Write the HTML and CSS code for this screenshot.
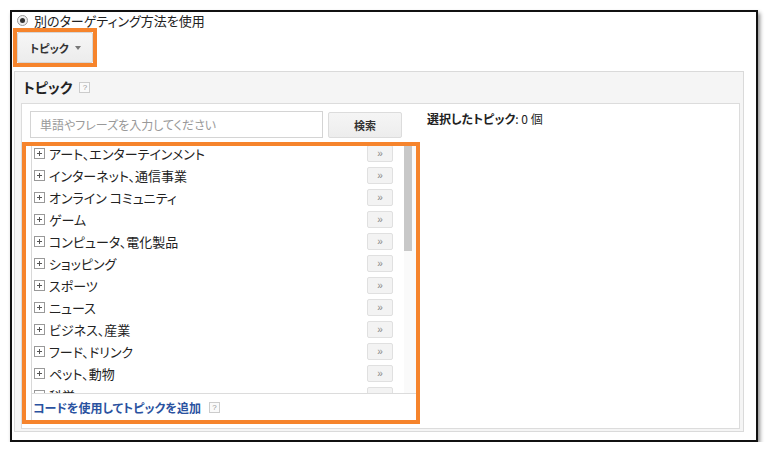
FILE: index.html
```html
<!DOCTYPE html>
<html lang="ja">
<head>
<meta charset="utf-8">
<link rel="stylesheet" href="styles.css">
</head>
<body>
<div class="frame">
  <div class="radio-row">
    <span class="radio"><span class="dot"></span></span>
    <span class="radio-label">別のターゲティング方法を使用</span>
  </div>
  <div class="hl hl-btn">
    <div class="topic-btn">トピック <span class="caret"></span></div>
  </div>
  <div class="panel">
    <div class="panel-head">トピック <span class="help">?</span></div>
    <div class="inner">
      <div class="left-col">
        <div class="search-row">
          <div class="search-input">単語やフレーズを入力してください</div>
          <div class="search-btn">検索</div>
        </div>
        <div class="hl hl-list">
          <div class="list-box">
            <div class="list-view">
              <div class="rows">
                <div class="row"><span class="plus"></span><span class="label">アート、エンターテインメント</span><span class="add">»</span></div>
                <div class="row"><span class="plus"></span><span class="label">インターネット、通信事業</span><span class="add">»</span></div>
                <div class="row"><span class="plus"></span><span class="label">オンライン コミュニティ</span><span class="add">»</span></div>
                <div class="row"><span class="plus"></span><span class="label">ゲーム</span><span class="add">»</span></div>
                <div class="row"><span class="plus"></span><span class="label">コンピュータ、電化製品</span><span class="add">»</span></div>
                <div class="row"><span class="plus"></span><span class="label">ショッピング</span><span class="add">»</span></div>
                <div class="row"><span class="plus"></span><span class="label">スポーツ</span><span class="add">»</span></div>
                <div class="row"><span class="plus"></span><span class="label">ニュース</span><span class="add">»</span></div>
                <div class="row"><span class="plus"></span><span class="label">ビジネス、産業</span><span class="add">»</span></div>
                <div class="row"><span class="plus"></span><span class="label">フード、ドリンク</span><span class="add">»</span></div>
                <div class="row"><span class="plus"></span><span class="label">ペット、動物</span><span class="add">»</span></div>
                <div class="row"><span class="plus"></span><span class="label">科学</span><span class="add">»</span></div>
              </div>
              <div class="scroll"><div class="thumb"></div></div>
            </div>
            <div class="list-foot"><span class="code-link">コードを使用してトピックを追加</span><span class="help">?</span></div>
          </div>
        </div>
      </div>
      <div class="right-col">
        <span class="sel-title">選択したトピック</span><span class="sel-count">: 0 個</span>
      </div>
    </div>
  </div>
</div>
</body>
</html>
```

FILE: styles.css
```css
* { box-sizing: border-box; }
html, body { margin: 0; padding: 0; background: #fff; }
body {
  font-family: "Noto Sans CJK JP", "Liberation Sans", sans-serif;
  font-feature-settings: "palt";
  color: #222;
  font-size: 13px;
}
.frame {
  margin: 10px 0 0 10px;
  width: 748px;
  height: 432px;
  border: 2px solid #111;
  box-shadow: 2px 3px 4px rgba(0,0,0,0.45);
  background: #fff;
  overflow: hidden;
}
.radio-row {
  display: flex;
  align-items: center;
  height: 15px;
  padding-left: 5px;
  margin-top: 1px;
}
.radio {
  width: 11px; height: 11px;
  border-radius: 50%;
  border: 1px solid #999;
  background: #eee;
  display: flex; align-items: center; justify-content: center;
}
.radio .dot { width: 5px; height: 5px; border-radius: 50%; background: #333; }
.radio-label { margin-left: 6px; font-size: 13px; line-height: 15px; color: #222; }

.hl { border: 4px solid #f6842c; }
.hl-btn {
  width: 84px; height: 39px;
  margin-left: 1px;
}
.topic-btn {
  width: 76px; height: 31px;
  background: linear-gradient(#f6f6f6, #ececec);
  border: 1px solid #d6d6d6;
  border-radius: 2px;
  font-size: 11px;
  font-weight: bold;
  color: #333;
  display: flex; align-items: center;
  padding-left: 12px;
}
.caret {
  display: inline-block;
  margin-left: 6px;
  width: 0; height: 0;
  border-left: 3px solid transparent;
  border-right: 3px solid transparent;
  border-top: 4px solid #777;
}

.panel {
  margin: 4px 0 0 2px;
  width: 730px;
  height: 361px;
  background: #f5f5f5;
  border: 1px solid #dadada;
  padding: 0 0 0 6px;
}
.panel-head {
  height: 31px;
  display: flex; align-items: flex-start;
  padding-top: 6px;
  font-size: 14px; font-weight: bold; color: #222;
  padding-left: 2px;
  line-height: 18px;
}
.panel-head .help { margin-top: 4px; }
.help {
  display: inline-flex; align-items: center; justify-content: center;
  width: 11px; height: 11px;
  border: 1px solid #ccc;
  background: #fafafa;
  color: #999;
  font-size: 8px; font-weight: normal;
  margin-left: 7px;
  font-family: "Liberation Sans", sans-serif;
}
.inner {
  width: 719px;
  height: 326px;
  background: #fff;
  border: 1px solid #dcdcdc;
  display: flex;
}
.left-col { width: 398px; display: flex; flex-direction: column; }
.search-row { display: flex; padding: 7px 0 0 8px; height: 38px; }
.search-input {
  width: 293px; height: 27px;
  border: 1px solid #d4d4d4;
  font-size: 12px; color: #999;
  padding-left: 9px;
  display: flex; align-items: center;
}
.search-btn {
  margin-left: 5px; margin-top: 1px;
  width: 74px; height: 26px;
  background: linear-gradient(#f5f5f5, #ededed);
  border: 1px solid #dcdcdc;
  border-radius: 2px;
  font-size: 11px; font-weight: bold; color: #333;
  display: flex; align-items: center; justify-content: center;
}
.hl-list { width: 398px; height: 282px; display: flex; flex-direction: column; }
.list-box {
  flex: 1;
  margin-left: 5px;
  border-left: 1px solid #d8d8d8;
  display: flex; flex-direction: column;
}
.list-view { height: 247px; overflow: hidden; display: flex; }
.rows { flex: 1; }
.row { height: 22px; display: flex; align-items: center; padding: 0 0 7px 2px; }
.plus {
  width: 11px; height: 11px;
  border: 1px solid #999;
  position: relative;
  flex: none;
}
.plus::before { content: ""; position: absolute; left: 2px; top: 4px; width: 5px; height: 1px; background: #555; }
.plus::after { content: ""; position: absolute; left: 4px; top: 2px; width: 1px; height: 5px; background: #555; }
.label { margin-left: 4px; font-size: 13px; color: #222; flex: 1; line-height: 13px; }
.add {
  width: 26px; height: 17px;
  flex: none;
  background: #f3f3f3;
  border: 1px solid #e0e0e0;
  border-radius: 2px;
  color: #888; font-size: 10px;
  display: flex; align-items: center; justify-content: center;
  margin-right: 11px;
  font-family: "Liberation Sans", sans-serif;
}
.scroll { width: 12px; background: #fafafa; padding-right: 4px; }
.thumb { width: 8px; height: 105px; background: #c8c8c8; }
.list-foot {
  border-top: 1px solid #dcdcdc;
  flex: 1;
  display: flex; align-items: center;
  padding-left: 1px;
}
.code-link { font-size: 12px; font-weight: bold; color: #2a52a0; }
.list-foot .help { margin-left: 8px; }
.right-col { padding: 6px 0 0 7px; font-size: 12px; color: #222; }
.sel-title { font-weight: bold; }
```
